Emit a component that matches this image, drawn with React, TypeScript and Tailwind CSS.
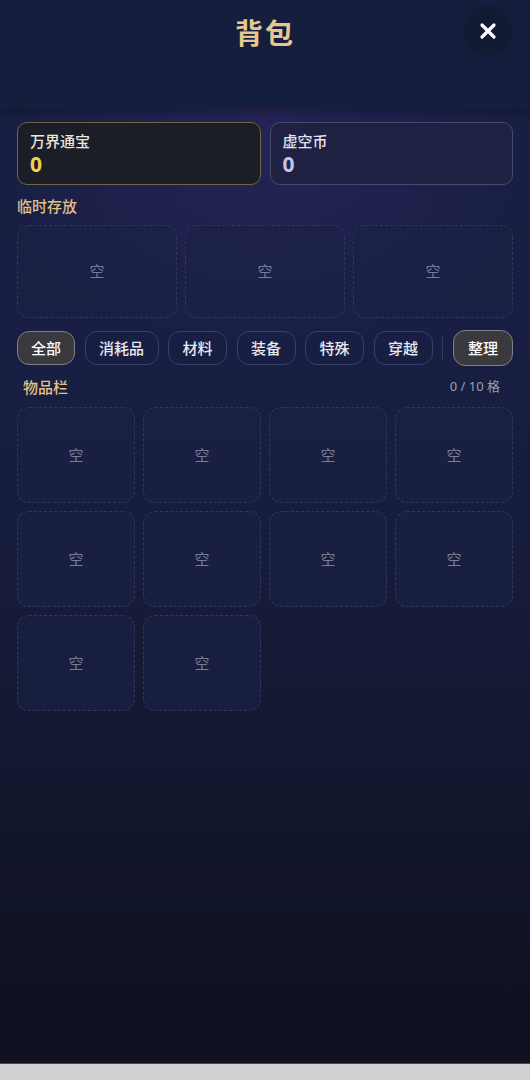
import { X } from "lucide-react";

const tabs = [
  { label: "全部", w: "w-[58px]" },
  { label: "消耗品", w: "w-[74px]" },
  { label: "材料", w: "w-[59px]" },
  { label: "装备", w: "w-[59px]" },
  { label: "特殊", w: "w-[59px]" },
  { label: "穿越", w: "w-[59px]" },
];

function EmptySlot({ className }: { className: string }) {
  return (
    <div
      className={`flex items-center justify-center rounded-xl border border-dashed border-[#2f385a] bg-[#1a2246]/60 text-[15px] text-[#767d98] ${className}`}
    >
      空
    </div>
  );
}

export default function App() {
  return (
    <div
      className="flex h-[1080px] w-[530px] flex-col overflow-hidden"
      style={{ fontFamily: '"Noto Sans", "Noto Sans CJK SC", sans-serif' }}
    >
      <div className="relative flex flex-1 flex-col bg-[linear-gradient(180deg,#161e3f_0%,#191f44_30%,#151b37_60%,#0f1121_95%)]">
        {/* header */}
        <header className="relative flex h-[108px] items-start justify-center bg-[#161e3e] shadow-[0_4px_10px_rgba(5,8,20,0.35)]">
          <h1 className="mt-[12px] text-[28px] font-bold tracking-[2px] text-[#e6c88c]">背包</h1>
          <button className="absolute right-[17px] top-[6px] flex h-[50px] w-[50px] items-center justify-center rounded-full bg-[#131a33]">
            <X className="h-[24px] w-[24px] text-white" strokeWidth={3.2} />
          </button>
        </header>

        <main className="flex flex-col bg-[radial-gradient(ellipse_55%_40%_at_50%_0%,rgba(70,50,140,0.3),transparent)] px-[17px] pt-[14px]">
          {/* currencies */}
          <div className="grid grid-cols-2 gap-[9px]">
            <div className="flex h-[63px] flex-col rounded-[10px] border border-[#6f6646] bg-[#1c1e27] px-[12px] pt-[8px]">
              <span className="text-[15px] font-medium leading-[20px] text-[#e9e6df]">万界通宝</span>
              <span className="text-[21px] font-bold leading-[26px] text-[#f3d24d]">0</span>
            </div>
            <div className="flex h-[63px] flex-col rounded-[10px] border border-[#4a4a70] bg-[#1e2142] px-[12px] pt-[8px]">
              <span className="text-[15px] font-medium leading-[20px] text-[#e4e2ee]">虚空币</span>
              <span className="text-[21px] font-bold leading-[26px] text-[#c5c2ee]">0</span>
            </div>
          </div>

          <div className="mt-[11px] text-[15px] font-medium leading-[20px] text-[#e0c287]">临时存放</div>

          <div className="mt-[9px] grid grid-cols-3 gap-[8px]">
            <EmptySlot className="h-[93px]" />
            <EmptySlot className="h-[93px]" />
            <EmptySlot className="h-[93px]" />
          </div>

          {/* tabs */}
          <div className="mt-[12px] flex items-center">
            <div className="flex gap-[9.5px]">
              {tabs.map((t, i) => (
                <button
                  key={t.label}
                  className={`h-[34px] ${t.w} whitespace-nowrap rounded-[12px] border text-[15px] font-medium ${
                    i === 0
                      ? "border-[#808080] bg-[#3a3a3e] text-white"
                      : "border-[#363f66] bg-transparent text-[#e8e8f0]"
                  }`}
                >
                  {t.label}
                </button>
              ))}
            </div>
            <div className="mx-[9px] h-[24px] w-px bg-[#343c5e]" />
            <button className="ml-auto h-[36px] w-[60px] whitespace-nowrap rounded-[12px] border border-[#808080] bg-[#3a3a3e] text-[15px] font-medium text-white">
              整理
            </button>
          </div>

          <div className="mt-[11px] flex items-center justify-between pl-[6px] pr-[13px]">
            <span className="text-[15px] font-medium leading-[20px] text-[#e0c287]">物品栏</span>
            <span className="text-[13px] text-[#9aa0b4]">0 / 10 格</span>
          </div>

          <div className="mt-[10px] grid grid-cols-4 gap-[8px]">
            {Array.from({ length: 10 }).map((_, i) => (
              <EmptySlot key={i} className="h-[96px]" />
            ))}
          </div>
        </main>
      </div>
      <div className="h-[17px] border-t border-[#4a4a55] bg-[#cfcfd4]" />
    </div>
  );
}
